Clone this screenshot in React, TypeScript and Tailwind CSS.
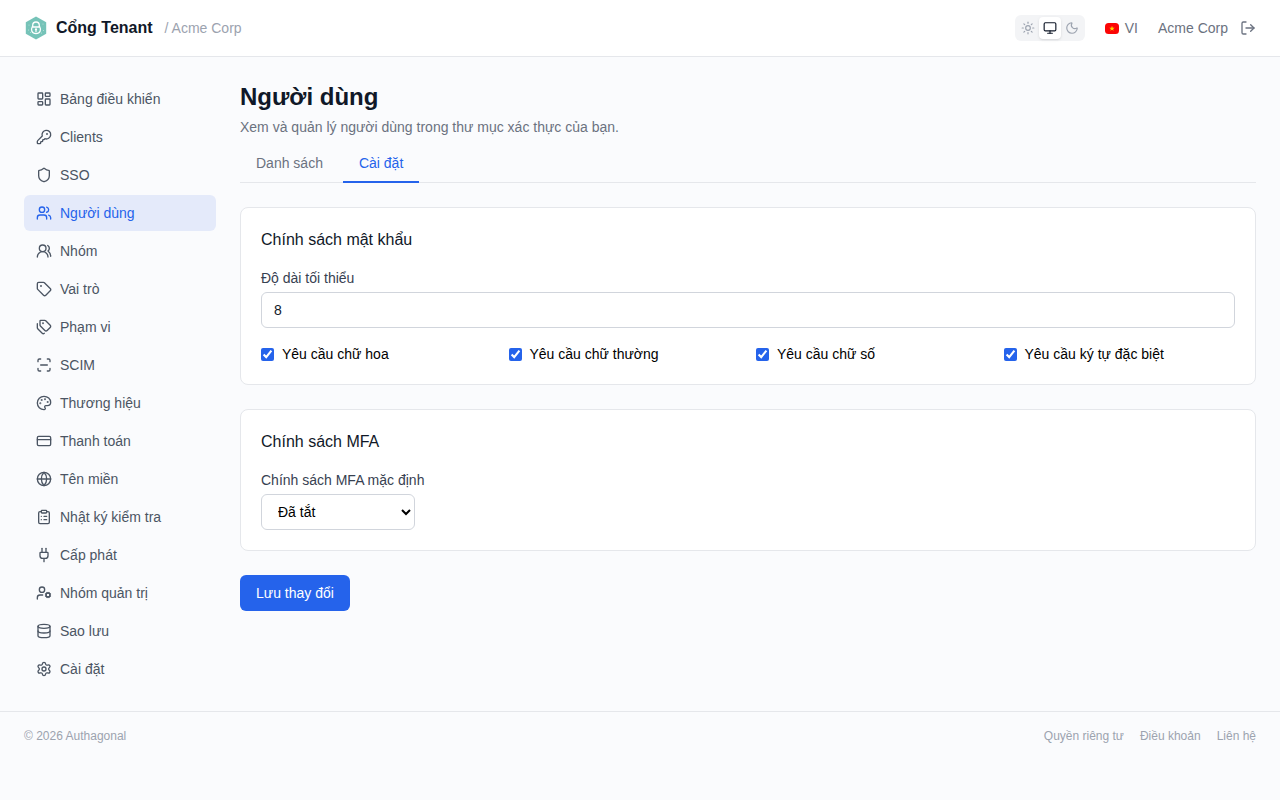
import { useState } from "react";
import {
  ClipboardList,
  CreditCard,
  Database,
  Globe,
  KeyRound,
  LayoutDashboard,
  LogOut,
  Monitor,
  Moon,
  Palette,
  Plug,
  ScanLine,
  Settings,
  Shield,
  Sun,
  Tag,
  Tags,
  UserCog,
  Users,
  UsersRound,
  type LucideIcon,
} from "lucide-react";
import { clsx } from "clsx";

type NavItem = {
  label: string;
  href: string;
  icon: LucideIcon;
};

const NAV_ITEMS: NavItem[] = [
  { label: "Bảng điều khiển", href: "#dashboard", icon: LayoutDashboard },
  { label: "Clients", href: "#clients", icon: KeyRound },
  { label: "SSO", href: "#sso", icon: Shield },
  { label: "Người dùng", href: "#users", icon: Users },
  { label: "Nhóm", href: "#groups", icon: UsersRound },
  { label: "Vai trò", href: "#roles", icon: Tag },
  { label: "Phạm vi", href: "#scopes", icon: Tags },
  { label: "SCIM", href: "#scim", icon: ScanLine },
  { label: "Thương hiệu", href: "#branding", icon: Palette },
  { label: "Thanh toán", href: "#billing", icon: CreditCard },
  { label: "Tên miền", href: "#domains", icon: Globe },
  { label: "Nhật ký kiểm tra", href: "#audit", icon: ClipboardList },
  { label: "Cấp phát", href: "#provisioning", icon: Plug },
  { label: "Nhóm quản trị", href: "#admins", icon: UserCog },
  { label: "Sao lưu", href: "#backup", icon: Database },
  { label: "Cài đặt", href: "#settings", icon: Settings },
];

const THEMES = [
  { id: "light", label: "Sáng", icon: Sun },
  { id: "system", label: "Hệ thống", icon: Monitor },
  { id: "dark", label: "Tối", icon: Moon },
];

const PASSWORD_RULES = [
  { id: "uppercase", label: "Yêu cầu chữ hoa" },
  { id: "lowercase", label: "Yêu cầu chữ thường" },
  { id: "digit", label: "Yêu cầu chữ số" },
  { id: "special", label: "Yêu cầu ký tự đặc biệt" },
];

const FOOTER_LINKS = [
  { label: "Quyền riêng tư", href: "#privacy" },
  { label: "Điều khoản", href: "#terms" },
  { label: "Liên hệ", href: "#contact" },
];

function Logo() {
  return (
    <svg aria-hidden viewBox="0 0 24 24" className="h-6 w-6 shrink-0">
      <path d="M12 0.5 22.2 6.2v11.6L12 23.5 1.8 17.8V6.2z" fill="#76c3b8" />
      <g fill="#c4e6e0">
        <circle cx="5" cy="9" r="0.5" />
        <circle cx="19" cy="8" r="0.5" />
        <circle cx="4.5" cy="14" r="0.5" />
        <circle cx="19.5" cy="14.5" r="0.5" />
        <circle cx="6.5" cy="16.500" r="0.5" />
        <circle cx="17.5" cy="17" r="0.5" />
      </g>
      <g fill="none" stroke="#fff" strokeWidth="1.3">
        <path d="M8.700 11V9.300a3.300 3.300 0 0 1 6.600 0V11" />
        <path d="M8.200 11h7.600c1.500 2.600.6 6.600-3.800 6.600S6.700 13.600 8.200 11z" />
      </g>
      <path d="M12 12.200a1.200 1.200 0 0 1 .6 2.200v1.800h-1.200v-1.800a1.200 1.200 0 0 1 .6-2.200z" fill="#fff" />
    </svg>
  );
}

function VietnamFlag() {
  return (
    <svg aria-hidden viewBox="0 0 14 11" className="h-[11px] w-3.5 shrink-0">
      <rect width="14" height="11" rx="3.5" fill="#fb0505" />
      <path d="m7 2.800.7 1.900h2L8.100 5.900l.6 1.900L7 6.700 5.300 7.800l.6-1.900-1.600-1.200h2z" fill="#ffd500" />
    </svg>
  );
}

function Header() {
  const [theme, setTheme] = useState("system");

  return (
    <header className="flex h-[57px] items-center justify-between border-b border-gray-200 bg-white px-6">
      <div className="flex items-center gap-3">
        <a href="#dashboard" className="flex items-center gap-2">
          <Logo />
          <span className="font-semibold text-gray-900">Cổng Tenant</span>
        </a>
        <span className="text-sm text-[#9ca3af]">/ Acme Corp</span>
      </div>

      <div className="flex items-center gap-5">
        <div className="flex rounded-md bg-gray-100 p-0.5">
          {THEMES.map(({ id, label, icon: Icon }) => (
            <button
              key={id}
              type="button"
              aria-label={label}
              aria-pressed={theme === id}
              onClick={() => setTheme(id)}
              className={clsx(
                "rounded p-1",
                theme === id ? "bg-white text-gray-900 shadow-sm" : "text-[#9ca3af]",
              )}
            >
              <Icon className="h-3.5 w-3.5" />
            </button>
          ))}
        </div>
        <button type="button" className="flex items-center gap-1.5 text-sm text-[#6b7280]">
          <VietnamFlag />
          VI
        </button>
        <div className="flex items-center gap-3 text-[#6b7280]">
          <span className="text-sm">Acme Corp</span>
          <button type="button" aria-label="Đăng xuất">
            <LogOut className="h-4 w-4" />
          </button>
        </div>
      </div>
    </header>
  );
}

function Sidebar() {
  return (
    <nav aria-label="Điều hướng chính" className="flex w-48 shrink-0 flex-col gap-0.5">
      {NAV_ITEMS.map(({ label, href, icon: Icon }) => {
        const active = href === "#users";
        return (
          <a
            key={href}
            href={href}
            aria-current={active ? "page" : undefined}
            className={clsx(
              "flex items-center gap-2 rounded-md px-3 py-2 text-sm",
              active ? "bg-[#e4eafa] text-[#2563eb]" : "text-[#4b5563]",
            )}
          >
            <Icon className="h-4 w-4 shrink-0" />
            {label}
          </a>
        );
      })}
    </nav>
  );
}

function Tabs() {
  return (
    <div className="mt-2 flex gap-1 border-b border-gray-200">
      <a href="#list" className="-mb-px border-b-2 border-transparent px-4 py-2 text-sm text-[#6b7280]">
        Danh sách
      </a>
      <a
        href="#user-settings"
        aria-current="page"
        className="-mb-px border-b-2 border-[#2563eb] px-4 py-2 text-sm text-[#2563eb]"
      >
        Cài đặt
      </a>
    </div>
  );
}

function UserSettingsForm() {
  return (
    <form className="mt-6 flex flex-col items-start gap-6" onSubmit={(e) => e.preventDefault()}>
      <section className="w-full rounded-lg border border-gray-200 bg-white p-5">
        <h2 className="text-gray-900">Chính sách mật khẩu</h2>
        <label htmlFor="min-length" className="mt-4 block text-sm text-[#374151]">
          Độ dài tối thiểu
        </label>
        <input
          id="min-length"
          type="number"
          defaultValue={8}
          className="mt-1 block h-9 w-full rounded-md border border-gray-300 px-3 text-sm text-gray-900"
        />
        <div className="mt-4 grid grid-cols-2 gap-4 lg:grid-cols-4">
          {PASSWORD_RULES.map((rule) => (
            <label key={rule.id} className="flex items-center gap-2 text-sm text-black">
              <input type="checkbox" name={rule.id} defaultChecked className="accent-[#2563eb]" />
              {rule.label}
            </label>
          ))}
        </div>
      </section>

      <section className="w-full rounded-lg border border-gray-200 bg-white p-5">
        <h2 className="text-gray-900">Chính sách MFA</h2>
        <label htmlFor="mfa-policy" className="mt-4 block text-sm text-[#374151]">
          Chính sách MFA mặc định
        </label>
        <select
          id="mfa-policy"
          defaultValue="disabled"
          className="mt-1 block h-9 w-[154px] rounded-md border border-gray-300 bg-white px-3 text-sm text-black"
        >
          <option value="disabled">Đã tắt</option>
          <option value="optional">Tùy chọn</option>
          <option value="required">Bắt buộc</option>
        </select>
      </section>

      <button type="submit" className="rounded-md bg-[#2563eb] px-4 py-2 text-sm text-white">
        Lưu thay đổi
      </button>
    </form>
  );
}

export default function App() {
  return (
    <div className="min-h-screen bg-[#fafbfd] font-['Liberation_Sans',Arial,sans-serif]">
      <Header />
      <div className="flex gap-6 p-6">
        <Sidebar />
        <main className="min-w-0 flex-1">
          <h1 className="text-2xl font-bold text-gray-900">Người dùng</h1>
          <p className="mt-1 text-sm text-[#6b7280]">
            Xem và quản lý người dùng trong thư mục xác thực của bạn.
          </p>
          <Tabs />
          <UserSettingsForm />
        </main>
      </div>
      <footer className="flex items-center justify-between border-t border-gray-200 px-6 py-4 text-xs text-[#9ca3af]">
        <span>© 2026 Authagonal</span>
        <div className="flex gap-4">
          {FOOTER_LINKS.map((link) => (
            <a key={link.href} href={link.href}>
              {link.label}
            </a>
          ))}
        </div>
      </footer>
    </div>
  );
}
